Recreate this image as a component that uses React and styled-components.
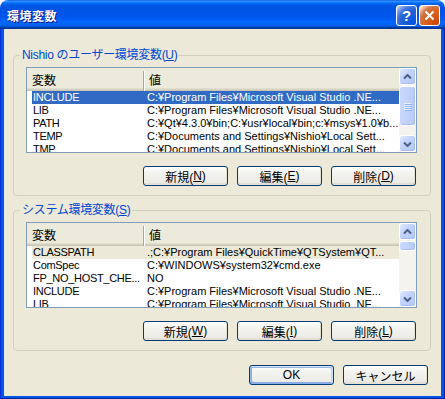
import React from 'react';
import styled, { createGlobalStyle } from 'styled-components';

const GlobalStyle = createGlobalStyle`
  html, body {
    margin: 0;
    padding: 0;
    background: #ffffff;
  }
  body {
    font-family: "Liberation Sans", "Noto Sans CJK JP", sans-serif;
    font-size: 11px;
  }
`;

const userVars = [
    ['INCLUDE', 'C:¥Program Files¥Microsoft Visual Studio .NE...'],
    ['LIB', 'C:¥Program Files¥Microsoft Visual Studio .NE...'],
    ['PATH', 'C:¥Qt¥4.3.0¥bin;C:¥usr¥local¥bin;c:¥msys¥1.0¥b...'],
    ['TEMP', 'C:¥Documents and Settings¥Nishio¥Local Sett...'],
    ['TMP', 'C:¥Documents and Settings¥Nishio¥Local Sett...'],
];

const systemVars = [
    ['CLASSPATH', '.;C:¥Program Files¥QuickTime¥QTSystem¥QT...'],
    ['ComSpec', 'C:¥WINDOWS¥system32¥cmd.exe'],
    ['FP_NO_HOST_CHE...', 'NO'],
    ['INCLUDE', 'C:¥Program Files¥Microsoft Visual Studio .NE...'],
    ['LIB', 'C:¥Program Files¥Microsoft Visual Studio .NE...'],
];

const Arrow = ({ down }) => (
    <svg width="9" height="6" viewBox="0 0 9 6">
        <path
            d={down ? 'M1 1.5 L4.5 5 L8 1.5' : 'M1 4.5 L4.5 1 L8 4.5'}
            fill="none"
            stroke="#4D6185"
            strokeWidth="2"
        />
    </svg>
);

const VarList = ({ rows, selected, focused, thumbTop, thumbHeight }) => (
    <List>
        <ListBody>
            <Header>
                <HeadCell>変数</HeadCell>
                <HeadCell divider>値</HeadCell>
            </Header>
            {rows.map(([name, value], i) => (
                <Row key={i} selected={i === selected} focused={focused}>
                    <NameCell>{name}</NameCell>
                    <ValueCell>{value}</ValueCell>
                </Row>
            ))}
        </ListBody>
        <ScrollBar>
            <ScrollButton><Arrow /></ScrollButton>
            <Track>
                <Thumb style={{ marginTop: thumbTop, height: thumbHeight }}>
                    {thumbHeight > 14 && <Grip><i /><i /><i /><i /></Grip>}
                </Thumb>
            </Track>
            <ScrollButton><Arrow down /></ScrollButton>
        </ScrollBar>
    </List>
);

const Key = ({ children }) => <u>{children}</u>;

const App = () => {
    return (
        <>
            <GlobalStyle />
            <Window>
                <TitleBar>
                    <Title>環境変数</Title>
                    <Controls>
                        <HelpButton>?</HelpButton>
                        <CloseButton>
                            <svg width="11" height="11" viewBox="0 0 11 11">
                                <path d="M1.5 1.5 L9.5 9.5 M9.5 1.5 L1.5 9.5" stroke="#fff" strokeWidth="2" />
                            </svg>
                        </CloseButton>
                    </Controls>
                </TitleBar>
                <Frame>
                    <Body>
                        <Group>
                            <Legend>Nishio のユーザー環境変数(<Key>U</Key>)</Legend>
                            <VarList rows={userVars} selected={0} focused thumbTop={1} thumbHeight={40} />
                            <ButtonRow>
                                <Button>新規(<Key>N</Key>)</Button>
                                <Button>編集(<Key>E</Key>)</Button>
                                <Button>削除(<Key>D</Key>)</Button>
                            </ButtonRow>
                        </Group>
                        <Group>
                            <Legend>システム環境変数(<Key>S</Key>)</Legend>
                            <VarList rows={systemVars} selected={0} thumbTop={1} thumbHeight={10} />
                            <ButtonRow>
                                <Button>新規(<Key>W</Key>)</Button>
                                <Button>編集(<Key>I</Key>)</Button>
                                <Button>削除(<Key>L</Key>)</Button>
                            </ButtonRow>
                        </Group>
                        <DialogButtons>
                            <Button isDefault>OK</Button>
                            <Button>キャンセル</Button>
                        </DialogButtons>
                    </Body>
                </Frame>
            </Window>
        </>
    );
};

export default App;

const Window = styled.div`
    width: 445px;
    height: 399px;
    display: flex;
    flex-direction: column;
    border-radius: 8px 8px 0 0;
    overflow: hidden;
`;

const TitleBar = styled.div`
    height: 29px;
    flex: none;
    display: flex;
    align-items: center;
    justify-content: space-between;
    padding: 0 5px 0 7px;
    background: linear-gradient(
        to bottom,
        #0058ee 0%, #3a93ff 4%, #288eff 6%, #127dff 8%, #036ffc 10%,
        #0262ee 14%, #0057e5 20%, #0054e3 24%, #0055eb 56%, #005bf5 66%,
        #026afe 76%, #0062ef 86%, #0052d6 92%, #0040ab 94%, #003092 100%
    );
`;

const Title = styled.div`
    color: #ffffff;
    font-family: "Noto Sans CJK JP", sans-serif;
    font-weight: bold;
    font-size: 12px;
    letter-spacing: 0.5px;
    text-shadow: 1px 1px #0f1089;
    margin-top: 1px;
`;

const Controls = styled.div`
    display: flex;
    gap: 2px;
    margin-top: 2px;
`;

const CtrlButton = styled.div`
    width: 21px;
    height: 21px;
    box-sizing: border-box;
    border: 1px solid #ffffff;
    border-radius: 3px;
    display: flex;
    align-items: center;
    justify-content: center;
    color: #ffffff;
`;

const HelpButton = styled(CtrlButton)`
    background: radial-gradient(circle at 90% 90%, #0054e9 0%, #2263d5 55%, #4479e4 70%, #a3bbec 90%, #ffffff 100%);
    font-family: "Liberation Sans", sans-serif;
    font-weight: bold;
    font-size: 15px;
`;

const CloseButton = styled(CtrlButton)`
    background: radial-gradient(circle at 90% 90%, #cc4600 0%, #dc6527 55%, #cd7546 70%, #ffccb2 90%, #ffffff 100%);
`;

const Frame = styled.div`
    flex: 1;
    display: flex;
    padding: 0 4px 3px 4px;
    background: #0055e5;
    box-shadow: inset 1px 0 #0831d9, inset -1px 0 #001ea0, inset 0 -1px #001ea0;
`;

const Body = styled.div`
    flex: 1;
    display: flex;
    flex-direction: column;
    background: #ece9d8;
    padding: 19px 10px 0 9px;
`;

const Group = styled.fieldset`
    margin: 0 0 7px 0;
    padding: 5px 13px 9px 12px;
    border: 1px solid #d0d0bf;
    border-radius: 4px;
    min-inline-size: 0;
`;

const Legend = styled.legend`
    margin-left: -6px;
    padding: 0 2px;
    color: #0046d5;
    font-family: "Liberation Sans", "Noto Sans CJK JP", sans-serif;
    font-size: 12px;
    line-height: 14px;
    letter-spacing: -0.3px;
`;

const List = styled.div`
    height: 86px;
    box-sizing: border-box;
    border: 1px solid #7f9db9;
    background: #ffffff;
    display: flex;
    overflow: hidden;
`;

const ListBody = styled.div`
    flex: 1;
    min-width: 0;
    display: flex;
    flex-direction: column;
`;

const Header = styled.div`
    height: 23px;
    flex: none;
    box-sizing: border-box;
    display: grid;
    grid-template-columns: 116px 1fr;
    background: #ebeadb;
    box-shadow: inset 0 -1px #cbc7b8, inset 0 -2px #d6d2c2, inset 0 -3px #e2decd;
    padding-bottom: 3px;
`;

const HeadCell = styled.div`
    display: flex;
    align-items: center;
    padding-left: ${p => (p.divider ? '5px' : '5px')};
    font-family: "Noto Sans CJK JP", sans-serif;
    font-size: 12px;
    color: #000000;
    border-left: ${p => (p.divider ? '1px solid #aca899' : 'none')};
    box-shadow: ${p => (p.divider ? 'inset 1px 0 #ffffff' : 'none')};
    margin-top: ${p => (p.divider ? '3px' : '0')};
    padding-bottom: ${p => (p.divider ? '3px' : '0')};
`;

const Row = styled.div`
    height: 13px;
    flex: none;
    display: grid;
    grid-template-columns: 111px 1fr;
    margin-left: 5px;
    line-height: 13px;
    white-space: nowrap;
    color: ${p => (p.selected && p.focused ? '#ffffff' : '#000000')};
    background: ${p => (p.selected ? (p.focused ? '#316ac5' : '#ece9d8') : 'transparent')};
`;

const NameCell = styled.div`
    padding-left: 1px;
    letter-spacing: -0.3px;
    overflow: hidden;
`;

const ValueCell = styled.div`
    padding-left: 4px;
    overflow: hidden;
`;

const ScrollBar = styled.div`
    width: 17px;
    flex: none;
    display: flex;
    flex-direction: column;
    background: #f4f3ee;
`;

const ScrollButton = styled.div`
    height: 17px;
    flex: none;
    box-sizing: border-box;
    border: 1px solid #ffffff;
    border-radius: 3px;
    background: linear-gradient(to bottom right, #e1eafe 0%, #c3d3fd 40%, #b4c8f6 100%);
    box-shadow: inset -1px -1px #a8bff0;
    display: flex;
    align-items: center;
    justify-content: center;
`;

const Track = styled.div`
    flex: 1;
    display: flex;
    flex-direction: column;
`;

const Thumb = styled.div`
    flex: none;
    box-sizing: border-box;
    border: 1px solid #ffffff;
    border-radius: 3px;
    background: linear-gradient(to right, #c9d8fc 0%, #c1d2fc 50%, #b6c9f6 100%);
    box-shadow: inset -1px -1px #a8bff0;
    display: flex;
    align-items: center;
    justify-content: center;
`;

const Grip = styled.div`
    display: flex;
    flex-direction: column;
    gap: 1px;

    i {
        display: block;
        width: 7px;
        height: 1px;
        background: #eef4fe;
        box-shadow: 1px 1px #8cb0f8;
    }
`;

const ButtonRow = styled.div`
    display: flex;
    justify-content: flex-end;
    gap: 9px;
    margin-top: 13px;
    margin-right: 1px;
`;

const Button = styled.div`
    width: 85px;
    height: 20px;
    box-sizing: border-box;
    border: 1px solid #003c74;
    border-radius: 3px;
    background: linear-gradient(to bottom, #ffffff 0%, #f4f4f0 30%, #ecebe6 85%, #d6d0c5 100%);
    box-shadow: ${p => (p.isDefault
        ? 'inset -1px 1px #cee7ff, inset 1px 2px #98b8ea, inset -2px 2px #bcd4f6, inset 1px -1px #89ade4, inset 2px -2px #89ade4'
        : 'inset -1px -1px #e3e0d5')};
    display: flex;
    align-items: center;
    justify-content: center;
    font-family: "Liberation Sans", "Noto Sans CJK JP", sans-serif;
    font-size: 12px;
    color: #000000;

    u {
        text-underline-offset: 1px;
    }
`;

const DialogButtons = styled.div`
    display: flex;
    justify-content: flex-end;
    gap: 9px;
    margin-top: 7px;
    padding-right: 3px;
`;
